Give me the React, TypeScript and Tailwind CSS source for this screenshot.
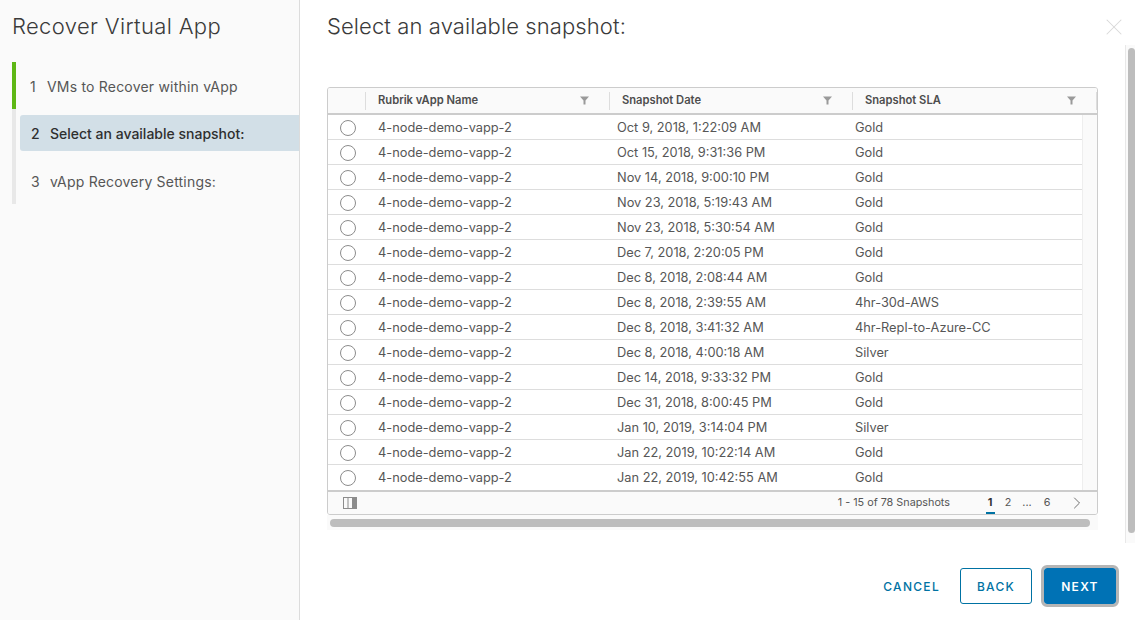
import { X, ChevronRight } from "lucide-react";

const rows = [
  ["Oct 9, 2018, 1:22:09 AM", "Gold"],
  ["Oct 15, 2018, 9:31:36 PM", "Gold"],
  ["Nov 14, 2018, 9:00:10 PM", "Gold"],
  ["Nov 23, 2018, 5:19:43 AM", "Gold"],
  ["Nov 23, 2018, 5:30:54 AM", "Gold"],
  ["Dec 7, 2018, 2:20:05 PM", "Gold"],
  ["Dec 8, 2018, 2:08:44 AM", "Gold"],
  ["Dec 8, 2018, 2:39:55 AM", "4hr-30d-AWS"],
  ["Dec 8, 2018, 3:41:32 AM", "4hr-Repl-to-Azure-CC"],
  ["Dec 8, 2018, 4:00:18 AM", "Silver"],
  ["Dec 14, 2018, 9:33:32 PM", "Gold"],
  ["Dec 31, 2018, 8:00:45 PM", "Gold"],
  ["Jan 10, 2019, 3:14:04 PM", "Silver"],
  ["Jan 22, 2019, 10:22:14 AM", "Gold"],
  ["Jan 22, 2019, 10:42:55 AM", "Gold"],
];

const columns = ["Rubrik vApp Name", "Snapshot Date", "Snapshot SLA"];

function FilterIcon() {
  return (
    <svg width="9" height="9" viewBox="0 0 9 9" className="shrink-0">
      <path d="M0 0.5h9L5.5 4.5V8.5H3.5V4.5z" fill="#9a9a9a" />
    </svg>
  );
}

function ColumnToggleIcon() {
  return (
    <svg width="14" height="12" viewBox="0 0 14 12">
      <rect x="0.5" y="0.5" width="13" height="11" fill="none" stroke="#8c8c8c" />
      <line x1="5" y1="1" x2="5" y2="11" stroke="#8c8c8c" />
      <rect x="9" y="1" width="4" height="10" fill="#8c8c8c" />
    </svg>
  );
}

export default function App() {
  return (
    <div className="flex h-[620px] w-[1135px] overflow-hidden bg-white font-['Inter',sans-serif] text-[#565656]">
      {/* Wizard steps */}
      <aside className="w-[300px] shrink-0 border-r border-[#dcdcdc] bg-[#fafafa] pl-3">
        <h1 className="flex h-[62px] items-start pt-[11px] text-[22px] leading-[30px] font-light tracking-[0.35px] text-[#3a3a3a]">
          Recover Virtual App
        </h1>
        <div className="flex">
          <div className="h-[142px] w-1 bg-[#e8e8e8]">
            <div className="h-[47px] bg-[#5eb715]" />
          </div>
          <nav className="flex-1 pl-1 text-[14px]">
            <div className="flex h-[53px] items-center pb-[4px] pl-[10px] tracking-[0.2px]">
              <span className="w-[17px]">1</span>
              <span>VMs to Recover within vApp</span>
            </div>
            <div className="flex h-[36px] items-center rounded-l-[3px] bg-[#d2dfe7] pl-[11px] font-medium text-[#2f2f2f]">
              <span className="w-[19px]">2</span>
              <span>Select an available snapshot:</span>
            </div>
            <div className="flex h-[53px] items-center pl-[11px] pt-[7px] tracking-[0.2px]">
              <span className="w-[19px]">3</span>
              <span>vApp Recovery Settings:</span>
            </div>
          </nav>
        </div>
      </aside>

      <main className="flex min-w-0 flex-1 flex-col">
        <div className="flex h-[45px] items-start justify-between pl-[27px] pr-[7px]">
          <h2 className="pt-[11px] text-[22px] leading-[30px] font-light tracking-[0.1px] text-[#3a3a3a]">
            Select an available snapshot:
          </h2>
          <X size={28} strokeWidth={0.9} className="mt-[13px] text-[#d8d8d8]" />
        </div>

        <div className="flex h-[500px] items-start pl-[27px]">
          <div className="w-[771px] shrink-0 pt-[42px]">
            {/* Grid */}
            <div className="overflow-hidden rounded-[3px] border border-[#cccccc]">
              <div className="grid h-[27px] grid-cols-[38px_244px_243px_1fr] items-center border-b-2 border-[#cccccc] bg-[#fafafa] text-[11.2px] font-semibold text-[#4d4d4d]">
                <div className="h-[18px] border-r border-[#dddddd]" />
                {columns.map((name) => (
                  <div key={name} className="flex h-[18px] items-center justify-between border-r border-[#dddddd] pl-3 pr-[20px]">
                    <span>{name}</span>
                    <FilterIcon />
                  </div>
                ))}
              </div>

              <div className="flex">
                <div className="flex-1">
                  {rows.map(([date, sla], i) => (
                    <div
                      key={i}
                      className={`grid h-[25px] grid-cols-[50px_239px_238px_1fr] items-center border-b pt-px text-[12.8px] ${i < rows.length - 1 ? "border-[#dddddd]" : "border-transparent"}`}
                    >
                      <div className="pl-3">
                        <div className="h-4 w-4 rounded-full border border-[#8c8c8c] bg-white" />
                      </div>
                      <div>4-node-demo-vapp-2</div>
                      <div>{date}</div>
                      <div>{sla}</div>
                    </div>
                  ))}
                </div>
                <div className="w-[15px] border-l border-[#eeeeee] bg-[#fafafa]" />
              </div>

              <div className="flex h-[24px] items-center justify-between border-t-2 border-[#cccccc] bg-[#fafafa] pl-[15px] pr-[10px] text-[10.8px]">
                <ColumnToggleIcon />
                <div className="flex h-full items-center">
                  <span className="mr-[31px]">1 - 15 of 78 Snapshots</span>
                  <div className="relative flex h-full items-center text-center">
                    <span className="w-[18px] font-bold text-[#333333]">1</span>
                    <span className="absolute bottom-0 left-[5px] h-[2px] w-[9px] bg-[#0072a3]" />
                    <span className="w-[18px]">2</span>
                    <span className="w-[20px]">...</span>
                    <span className="w-[20px]">6</span>
                    <ChevronRight size={20} strokeWidth={1} className="ml-[10px] text-[#555555]" />
                  </div>
                </div>
              </div>
            </div>

            {/* Horizontal scrollbar */}
            <div className="flex h-[15px] items-center bg-[#fafafa] pl-[3px] pr-2">
              <div className="h-2 w-full rounded-full bg-[#bdbdbd]" />
            </div>
          </div>

          {/* Vertical scrollbar */}
          <div className="ml-auto h-[498px] w-[10px] shrink-0 border-l border-[#e8e8e8] bg-[#fafafa] pl-[2px] pt-[3px]">
            <div className="h-[485px] rounded-[4px] bg-[#bdbdbd]" />
          </div>
        </div>

        <div className="flex flex-1 items-start justify-end pr-[19px] pt-[23px] text-[12px] font-medium tracking-[1.3px] text-[#0072a3]">
          <button className="mr-[20px] h-9 pt-px">CANCEL</button>
          <button className="mr-[12px] h-9 w-[72px] rounded-[3px] border border-[#0072a3] pt-px">BACK</button>
          <button className="h-9 w-[72px] rounded-[3px] bg-[#0072b5] pt-px font-semibold text-white outline-[3px] outline-[#b5b5b5]">
            NEXT
          </button>
        </div>
      </main>
    </div>
  );
}
